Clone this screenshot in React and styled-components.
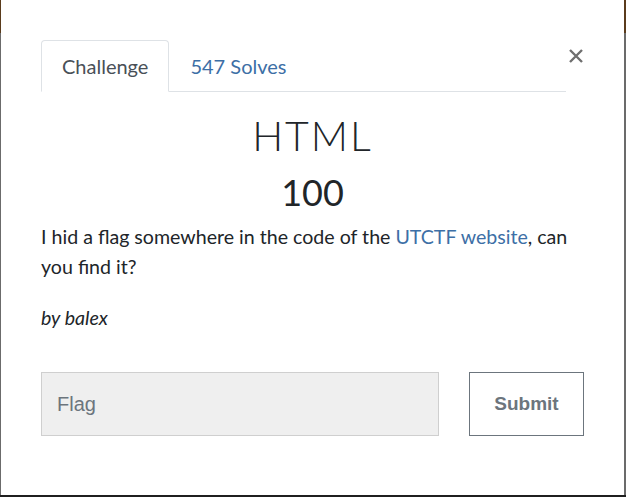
import React from "react";
import styled, { createGlobalStyle } from "styled-components";

const Global = createGlobalStyle`
  html, body { margin: 0; padding: 0; }
  body { font-family: Lato, "Open Sans", sans-serif; background: #6b6b6b; }
`;

const Backdrop = styled.div`
  width: 626px;
  height: 497px;
  box-sizing: border-box;
  padding: 0 2px 2px 1px;
  background:
    linear-gradient(to top, #1f1f1f 0, #1f1f1f 2px, transparent 2px),
    linear-gradient(to bottom, #5a3b1c 0, #5a3b1c 33px, #6b6b6b 33px);
  display: flex;
`;

const Modal = styled.div`
  flex: 1;
  background: #fff;
  padding: 40px 40px 0 40px;
  display: flex;
  flex-direction: column;
  position: relative;
`;

const TabBar = styled.div`
  display: flex;
  border-bottom: 1px solid #dee2e6;
  margin-right: 18px;
`;

const Tab = styled.div`
  padding: 0 20px;
  height: 50px;
  display: flex;
  align-items: center;
  font-size: 20px;
  color: ${p => (p.$active ? "#495057" : "#3d6fa6")};
  border: 1px solid ${p => (p.$active ? "#dee2e6" : "transparent")};
  border-bottom-color: ${p => (p.$active ? "#fff" : "transparent")};
  border-radius: 4px 4px 0 0;
  margin-bottom: -1px;
  background: ${p => (p.$active ? "#fff" : "transparent")};
`;

const Close = styled.div`
  position: absolute;
  top: 46px;
  right: 38px;
  width: 20px;
  height: 20px;
  display: flex;
  align-items: center;
  justify-content: center;
`;

const Title = styled.h3`
  margin: 20px 0 0;
  text-align: center;
  font-weight: 300;
  font-size: 41px;
  letter-spacing: 2px;
  line-height: 48px;
  color: #212529;
`;

const Points = styled.div`
  text-align: center;
  font-size: 36px;
  font-weight: 400;
  line-height: 44px;
  margin-top: 10px;
  color: #212529;
`;

const Description = styled.p`
  margin: 8px 0 0;
  font-size: 19.6px;
  line-height: 30px;
  color: #212529;
`;

const Link = styled.a`
  color: #3d6fa6;
  text-decoration: none;
`;

const Author = styled.p`
  margin: 24px 0 0;
  font-size: 19.6px;
  font-style: italic;
  color: #212529;
`;

const FormRow = styled.div`
  display: flex;
  margin-top: 43px;
  gap: 30px;
`;

const FlagInput = styled.input`
  width: 398px;
  height: 64px;
  box-sizing: border-box;
  background: #efefef;
  border: 1px solid #cfcfcf;
  padding: 0 15px;
  font-family: "Liberation Sans", Arial, sans-serif;
  font-size: 20px;
  color: #495057;
  outline: none;
  &::placeholder { color: #6c757d; }
`;

const SubmitButton = styled.button`
  width: 115px;
  height: 64px;
  box-sizing: border-box;
  background: #fff;
  border: 1px solid #6c757d;
  font-family: "Liberation Sans", Arial, sans-serif;
  font-weight: 700;
  font-size: 19px;
  color: #6c757d;
  padding: 0;
`;

export default function App() {
  return (
    <>
      <Global />
      <Backdrop>
        <Modal>
          <TabBar>
            <Tab $active>Challenge</Tab>
            <Tab>547 Solves</Tab>
          </TabBar>
          <Close>
            <svg width="16" height="16" viewBox="0 0 16 16">
              <path d="M2 2 L14 14 M14 2 L2 14" stroke="#6f6f6f" strokeWidth="2.4" strokeLinecap="butt" />
            </svg>
          </Close>
          <Title>HTML</Title>
          <Points>100</Points>
          <Description>
            I hid a flag somewhere in the code of the <Link href="#">UTCTF website</Link>, can you find it?
          </Description>
          <Author>by balex</Author>
          <FormRow>
            <FlagInput placeholder="Flag" />
            <SubmitButton>Submit</SubmitButton>
          </FormRow>
        </Modal>
      </Backdrop>
    </>
  );
}
